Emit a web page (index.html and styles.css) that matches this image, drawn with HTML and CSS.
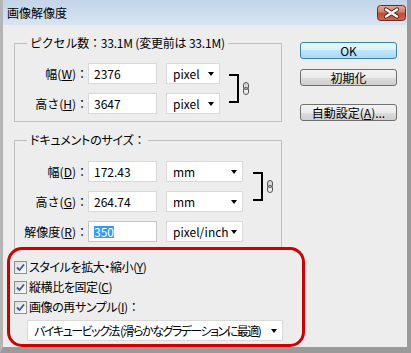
FILE: index.html
```html
<!DOCTYPE html>
<html lang="ja">
<head>
  <meta charset="UTF-8">
  <title>画像解像度</title>
  <link rel="stylesheet" href="styles.css">
</head>
<body>
  <div class="window">
    <div class="titlebar">
      <span class="title">画像解像度</span>
      <span class="close-btn">
        <svg width="29" height="16" viewBox="0 0 29 16">
          <defs>
            <linearGradient id="closeBg" x1="0" y1="0" x2="0" y2="1">
              <stop offset="0" stop-color="#e9a99b"/>
              <stop offset="0.45" stop-color="#d47a66"/>
              <stop offset="0.5" stop-color="#c24a31"/>
              <stop offset="1" stop-color="#d2664a"/>
            </linearGradient>
          </defs>
          <rect x="0.5" y="0.5" width="28" height="15" rx="3" fill="url(#closeBg)" stroke="#6e2a20"/>
          <path d="M9 4.5 L20 11.5 M20 4.5 L9 11.5" stroke="#4a2420" stroke-width="4.2" stroke-linecap="round"/>
          <path d="M9 4.5 L20 11.5 M20 4.5 L9 11.5" stroke="#fff" stroke-width="2.4" stroke-linecap="round"/>
        </svg>
      </span>
    </div>

    <div class="content">
      <div class="main">
        <fieldset class="group pixels">
          <legend>ピクセル数：33.1M (変更前は 33.1M)</legend>
          <div class="linked">
            <div class="rows">
              <div class="row">
                <span class="row-label">幅(<u>W</u>)：</span>
                <span class="field">2376</span>
                <span class="select small">pixel<span class="arrow"></span></span>
              </div>
              <div class="row">
                <span class="row-label">高さ(<u>H</u>)：</span>
                <span class="field">3647</span>
                <span class="select small">pixel<span class="arrow"></span></span>
              </div>
            </div>
            <div class="link">
              <span class="bracket"></span>
              <svg class="chain" width="6" height="13" viewBox="0 0 6 13">
                <rect x="0.5" y="0.5" width="5" height="7" rx="2.5" fill="#d8d8d8" stroke="#555"/>
                <rect x="0.5" y="5.5" width="5" height="7" rx="2.5" fill="none" stroke="#555"/>
              </svg>
            </div>
          </div>
        </fieldset>

        <fieldset class="group doc">
          <legend><span class="kana">ドキュメントのサイズ</span>：</legend>
          <div class="linked">
            <div class="rows">
              <div class="row">
                <span class="row-label">幅(<u>D</u>)：</span>
                <span class="field">172.43</span>
                <span class="select mid">mm<span class="arrow"></span></span>
              </div>
              <div class="row">
                <span class="row-label">高さ(<u>G</u>)：</span>
                <span class="field">264.74</span>
                <span class="select mid">mm<span class="arrow"></span></span>
              </div>
            </div>
            <div class="link wide-gap">
              <span class="bracket"></span>
              <svg class="chain" width="6" height="13" viewBox="0 0 6 13">
                <rect x="0.5" y="0.5" width="5" height="7" rx="2.5" fill="#d8d8d8" stroke="#555"/>
                <rect x="0.5" y="5.5" width="5" height="7" rx="2.5" fill="none" stroke="#555"/>
              </svg>
            </div>
          </div>
          <div class="row last">
            <span class="row-label">解像度(<u>R</u>)：</span>
            <span class="field focused"><span class="selected-text">350</span></span>
            <span class="select mid">pixel/inch<span class="arrow"></span></span>
          </div>
        </fieldset>

        <div class="options">
          <div class="check-row">
            <span class="checkbox"><svg width="9" height="9" viewBox="0 0 9 9"><path d="M1 4.5 L3.5 7 L8 1.5" fill="none" stroke="#3d5a8c" stroke-width="1.8"/></svg></span>
            <span class="check-label"><span class="kana">スタイルを拡大・縮小(<u>Y</u>)</span></span>
          </div>
          <div class="check-row">
            <span class="checkbox"><svg width="9" height="9" viewBox="0 0 9 9"><path d="M1 4.5 L3.5 7 L8 1.5" fill="none" stroke="#3d5a8c" stroke-width="1.8"/></svg></span>
            <span class="check-label"><span class="kana">縦横比を固定(<u>C</u>)</span></span>
          </div>
          <div class="check-row">
            <span class="checkbox"><svg width="9" height="9" viewBox="0 0 9 9"><path d="M1 4.5 L3.5 7 L8 1.5" fill="none" stroke="#3d5a8c" stroke-width="1.8"/></svg></span>
            <span class="check-label"><span class="kana">画像の再サンプル(<u>I</u>)</span>：</span>
          </div>
          <span class="select wide"><span class="kana">バイキュービック法 (滑らかなグラデーションに最適)</span><span class="arrow"></span></span>
        </div>
      </div>

      <div class="side">
        <button class="btn default">OK</button>
        <button class="btn reset">初期化</button>
        <button class="btn auto">自動設定(<u>A</u>)...</button>
      </div>
    </div>

    <div class="highlight"></div>
  </div>
</body>
</html>
```

FILE: styles.css
```css
body {
  margin: 0;
  font-family: "Noto Sans CJK JP", "Noto Sans", sans-serif;
  font-size: 12px;
  line-height: 16px;
  color: #000;
  background: #fff;
}
/* пропорциональная кана, как в Meiryo UI */
.kana {
  font-feature-settings: "palt";
}
.window {
  position: relative;
  width: 411px;
  height: 353px;
  box-sizing: border-box;
  background: #ededed;
  border-left: 3px solid #b5b5b5;
  border-right: 4px solid #9a9a9a;
  border-bottom: 6px solid #9a9a9a;
  display: flex;
  flex-direction: column;
}
.titlebar {
  height: 25px;
  flex-shrink: 0;
  display: flex;
  justify-content: space-between;
  align-items: center;
  padding: 0 1px 0 4px;
  background: linear-gradient(#c3d4e9, #d7e4f3);
}
.close-btn {
  align-self: flex-start;
  margin-top: 5px;
  height: 16px;
}
.close-btn svg {
  display: block;
}

.content {
  display: flex;
  padding: 10px 0 0 11px;
}
.main {
  width: 268px;
}

/* ====== группы ====== */
.group {
  margin: 0;
  padding: 0 0 7px 0;
  border: 1px solid #bfbfbf;
  min-width: 0;
}
.group legend {
  margin-left: 12px;
  padding: 0 3px;
  line-height: 16px;
  letter-spacing: -0.2px;
}
.group.doc {
  margin-top: 10px;
  padding-bottom: 6px;
}
.linked {
  display: flex;
  align-items: center;
  padding-top: 12px;
}
.group.doc .linked {
  padding-top: 13px;
}
.rows {
  display: flex;
  flex-direction: column;
  gap: 9px;
}
.row {
  display: flex;
  align-items: center;
  height: 21px;
}
.row.last {
  margin-top: 9px;
}
.row-label {
  width: 73px;
  text-align: right;
  white-space: nowrap;
}
.field {
  width: 69px;
  height: 21px;
  box-sizing: border-box;
  border: 1px solid #d9d9d9;
  background: #fff;
  padding-left: 5px;
  line-height: 19px;
}
.field.focused {
  border-color: #c5c5c5;
}
.selected-text {
  background: #3399ff;
  color: #fff;
  line-height: 12px;
  display: inline-block;
}
.select {
  height: 21px;
  box-sizing: border-box;
  border: 1px solid #d9d9d9;
  background: #fff;
  display: flex;
  align-items: center;
  justify-content: space-between;
  padding: 0 5px 0 6px;
  margin-left: 9px;
  white-space: nowrap;
}
.select.small {
  width: 54px;
}
.select.mid {
  width: 77px;
}
.arrow {
  width: 0;
  height: 0;
  border-left: 3.5px solid transparent;
  border-right: 3.5px solid transparent;
  border-top: 4px solid #000;
}
.link {
  display: flex;
  align-items: center;
  margin-left: 9px;
}
.link.wide-gap {
  margin-left: 10px;
}
.bracket {
  width: 8px;
  height: 25px;
  border: 2px solid #000;
  border-left: 0;
}
.chain {
  margin-left: 4px;
  display: block;
}

/* ====== флажки ====== */
.options {
  margin-top: 8px;
}
.check-row {
  display: flex;
  align-items: center;
  height: 20px;
}
.check-label {
  white-space: nowrap;
}
.check-label .kana {
  letter-spacing: -0.4px;
}
.checkbox {
  width: 13px;
  height: 13px;
  box-sizing: border-box;
  border: 1px solid #8f8f8f;
  background: linear-gradient(135deg, #dcdcdc, #fbfbfb);
  margin-right: 2px;
  display: flex;
  align-items: center;
  justify-content: center;
}
.checkbox svg {
  display: block;
}
.select.wide {
  width: 256px;
  margin: 3px 0 0 13px;
}
.select.wide .kana {
  letter-spacing: -1.5px;
}

/* ====== кнопки ====== */
.side {
  margin-left: 18px;
  padding-top: 7px;
  display: flex;
  flex-direction: column;
}
.btn {
  width: 97px;
  height: 17px;
  padding: 0;
  border: 1px solid #707070;
  border-radius: 3px;
  background: linear-gradient(#f2f2f2 0%, #ebebeb 50%, #dddddd 50%, #cfcfcf 100%);
  font: inherit;
  line-height: 15px;
  color: #000;
}
.btn.default {
  border-color: #3c7fb1;
  background: linear-gradient(#eaf6fd 0%, #d9f0fc 50%, #bee6fd 50%, #a7d9f5 100%);
}
.btn.reset {
  margin-top: 10px;
}
.btn.auto {
  margin-top: 18px;
}

/* красная рамка-выделение поверх окна */
.highlight {
  position: absolute;
  left: 4px;
  top: 247px;
  width: 298px;
  height: 100px;
  box-sizing: border-box;
  border: 3px solid #d00000;
  border-radius: 15px;
}
```
